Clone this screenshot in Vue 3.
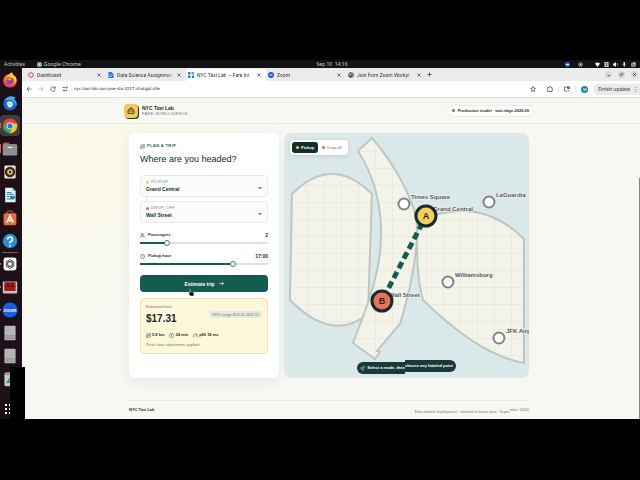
<script setup>
import { ref, computed } from 'vue'

const tabs = [
  { title: 'Dashboard', icon: 'ring' },
  { title: 'Data Science Assignmen', icon: 'doc' },
  { title: 'NYC Taxi Lab — Fare Int', icon: 'taxi', active: true },
  { title: 'Zoom', icon: 'zoom' },
  { title: 'Join from Zoom Workpl', icon: 'globe' },
]

const places = [
  { name: 'Times Square', x: 120, y: 71, lx: 127, ly: 66 },
  { name: 'Grand Central', x: 142, y: 83, lx: 149, ly: 78 },
  { name: 'LaGuardia', x: 205, y: 69, lx: 212, ly: 64 },
  { name: 'Williamsburg', x: 164, y: 149, lx: 171, ly: 144 },
  { name: 'Wall Street', x: 98, y: 168, lx: 105, ly: 164 },
  { name: 'JFK Airport', x: 215, y: 205, lx: 222, ly: 200 },
]

const pickup = ref('Grand Central')
const dropoff = ref('Wall Street')
const passengers = ref(2)
const hour = ref(17)
const mode = ref('pickup')

const from = computed(() => places.find((p) => p.name === pickup.value))
const to = computed(() => places.find((p) => p.name === dropoff.value))
const others = computed(() => places.filter((p) => p !== from.value && p !== to.value))
const passengerFill = computed(() => ({ '--fill': ((passengers.value - 1) / 5) * 100 + '%' }))
const hourFill = computed(() => ({ '--fill': (hour.value / 23) * 100 + '%' }))

function choose(place) {
  if (mode.value === 'pickup') pickup.value = place.name
  else dropoff.value = place.name
}
</script>

<template>
  <div class="screen">
    <div class="topbar">
      <div class="topbar-left">
        <span>Activities</span>
        <span class="app-name">
          <svg width="5" height="5" viewBox="0 0 10 10"><circle cx="5" cy="5" r="5" fill="#bbb" /><circle cx="5" cy="5" r="2" fill="#eee" stroke="#444" /></svg>
          Google Chrome
        </span>
      </div>
      <span class="clock">Sep 10&nbsp; 14:16</span>
      <div class="status">
        <svg viewBox="0 0 10 10"><circle cx="5" cy="5" r="5" fill="#2a67e0" /><path d="M2 5h6" stroke="#fff" stroke-width="2" /></svg>
        <svg class="gap-after" viewBox="0 0 10 10"><circle cx="5" cy="5" r="4" fill="#555" stroke="#bbb" /><circle cx="5" cy="5" r="1.5" fill="#ddd" /></svg>
        <svg viewBox="0 0 10 10"><path d="M0 3Q5-1 10 3L5 10Z" fill="#fff" /></svg>
        <svg viewBox="0 0 10 10"><rect x="1" width="8" height="10" fill="#ddd" /><path d="M3 3l4 4-2 2V1l2 2-4 4" stroke="#222" fill="none" /></svg>
        <svg viewBox="0 0 10 10"><path d="M0 3h2l4-3v10L2 7H0Z" fill="#eee" /><path d="M8 2q2 3 0 6" stroke="#eee" fill="none" /></svg>
        <svg viewBox="0 0 10 10"><rect x="3" width="3" height="7" rx="1" fill="#eee" /><path d="M1 5q3 5 7 0M5 8v2" stroke="#eee" fill="none" /></svg>
        <svg viewBox="0 0 10 10"><path d="M1 3h7v6H1ZM3 1h6v6" fill="#777" stroke="#ddd" /></svg>
      </div>
    </div>

    <div class="workspace">
      <nav class="dock" aria-label="Applications">
        <a href="#" class="dock-item" aria-label="Firefox">
          <svg viewBox="0 0 20 20"><circle cx="10" cy="11" r="8.5" fill="#ff7a1a" /><path d="M4 4Q8 5 9 3Q11 0 13 1Q13 4 17 6Q20 12 15 17Q18 8 11 7Z" fill="#ffcb2e" /><path d="M2 8Q1 17 10 19Q17 18 18 12Q13 19 7 14Z" fill="#f43d5c" /><circle cx="10" cy="11" r="4" fill="#7740c8" /><path d="M6 9q4-3 7 0q-2 0-3 2Z" fill="#ff9425" /></svg>
        </a>
        <a href="#" class="dock-item" aria-label="Thunderbird">
          <svg viewBox="0 0 20 20"><circle cx="10" cy="11" r="8.5" fill="#1769cf" /><path d="M3 7Q8-1 17 3L14 6Q19 7 18 14Q14 3 3 7Z" fill="#48aaf1" /><path d="M6 9q4-3 8 1q0 4-4 6q-4-2-4-7Z" fill="#e8f5ff" /><path d="M7 9l3 3 4-2" stroke="#67a8df" fill="none" /></svg>
        </a>
        <a href="#" class="dock-item current" aria-label="Google Chrome">
          <svg viewBox="0 0 20 20"><circle cx="10" cy="10" r="9" fill="#34a853" /><path d="M2.2 5.5A9 9 0 0 1 18.5 7H10L6 12Z" fill="#ea4335" /><path d="M18.5 7A9 9 0 0 1 9.5 19L14 12Q15 9 12 7Z" fill="#fbc817" /><circle cx="10" cy="10" r="4.3" fill="#fff" /><circle cx="10" cy="10" r="3.3" fill="#2878e8" /></svg>
        </a>
        <a href="#" class="dock-item running" aria-label="Files">
          <svg viewBox="0 0 20 20"><path d="M1 4q0-2 2-2h5l2 2h7q2 0 2 2v4H1Z" fill="#b8543c" /><rect x="1" y="4" width="18" height="14" rx="1.500" fill="#8f8f8f" /><path d="M7 8h6" stroke="#eee" stroke-width="1.500" /></svg>
        </a>
        <a href="#" class="dock-item" aria-label="Rhythmbox">
          <svg viewBox="0 0 20 20"><rect x="3" y="2" width="14" height="16" rx="1.5" fill="#eee8d7" /><circle cx="10" cy="10" r="6.5" fill="#302c29" /><circle cx="10" cy="10" r="3.5" fill="#f6c23c" /><circle cx="10" cy="10" r="1.5" fill="#302c29" /></svg>
        </a>
        <a href="#" class="dock-item" aria-label="Writer">
          <svg viewBox="0 0 20 20"><path d="M4 1h9l4 4v14H4Z" fill="#e8f5fb" /><path d="M13 1v4h4" fill="#7dc0df" /><path d="M6 7h6M6 9h9M6 12h3M6 15h9" stroke="#2388b8" stroke-width="1.3" /><rect x="10" y="11" width="6" height="4" fill="#2388b8" /></svg>
        </a>
        <a href="#" class="dock-item" aria-label="Software">
          <svg viewBox="0 0 20 20"><path d="M6 5q0-4 4-4t4 4" fill="none" stroke="#aa4a27" stroke-width="1.5" /><rect x="2" y="4" width="16" height="15" rx="2" fill="#ed6b3b" /><path d="M6 16L10 7l4 9M7 13h7" stroke="#fff" stroke-width="2" fill="none" /></svg>
        </a>
        <a href="#" class="dock-item" aria-label="Help">
          <svg viewBox="0 0 20 20"><circle cx="10" cy="10" r="9" fill="#2591d4" /><path d="M7 8q0-3 3-3t3 3q0 2-3 3v2M10 15v2" stroke="#fff" stroke-width="2" fill="none" /></svg>
        </a>
        <a href="#" class="dock-item after-line dot" aria-label="ChatGPT">
          <svg viewBox="0 0 20 20"><rect x="2" y="2" width="16" height="16" rx="3" fill="#fff" /><g fill="none" stroke="#333" stroke-width=".9"><ellipse cx="10" cy="10" rx="2.800" ry="5.500" /><ellipse cx="10" cy="10" rx="2.800" ry="5.500" transform="rotate(60 10 10)" /><ellipse cx="10" cy="10" rx="2.800" ry="5.500" transform="rotate(120 10 10)" /></g></svg>
        </a>
        <a href="#" class="dock-item dot" aria-label="Terminal">
          <svg viewBox="0 0 20 20"><rect x="1" y="3" width="18" height="15" rx="1" fill="#c9c2c0" /><rect x="3" y="4" width="14" height="11" fill="#a01a1c" /><path d="M3 9h14M8 5l-1 5M13 4v6" stroke="#5b0c10" /></svg>
        </a>
        <a href="#" class="dock-item dot" aria-label="Zoom">
          <svg viewBox="0 0 20 20"><circle cx="10" cy="10" r="9.500" fill="#185ee6" /><text x="10" y="12" text-anchor="middle" class="zoom-word">zoom</text></svg>
        </a>
        <a v-for="n in 2" :key="n" href="#" class="dock-item" aria-label="Drive">
          <svg viewBox="0 0 20 20"><rect x="3" y="1" width="14" height="18" rx="1" fill="#b5b5b5" /><text x="10" y="17" text-anchor="middle" class="ssd-word">SSD</text></svg>
        </a>
        <a href="#" class="dock-item" aria-label="Trash">
          <svg viewBox="0 0 20 20"><rect x="3" y="2" width="14" height="17" rx="2" fill="#c8c8c8" /><path d="M3 4h14" stroke="#555" /><path d="M7 14l3-5 3 5Z" fill="none" stroke="#2c9a45" stroke-width="2" /></svg>
        </a>
        <button class="apps" aria-label="Show applications">
          <svg width="8" height="12" viewBox="0 0 8 12"><g fill="#fff"><rect width="2" height="2" y="1" /><rect x="4" width="2" height="2" y="1" /><rect y="5" width="2" height="2" /><rect x="4" y="5" width="2" height="2" /><rect y="9" width="2" height="2" /><rect x="4" y="9" width="2" height="2" /></g></svg>
        </button>
        <div class="redaction"></div>
      </nav>

      <div class="browser">
        <div class="tabstrip">
          <div v-for="tab in tabs" :key="tab.title" class="tab" :class="{ active: tab.active }">
            <svg v-if="tab.icon === 'ring'" viewBox="0 0 12 12"><circle cx="6" cy="6" r="4.700" fill="none" stroke="#e0483d" stroke-width="2" /></svg>
            <svg v-else-if="tab.icon === 'doc'" viewBox="0 0 12 12"><path d="M1 0h6l4 4v8H1Z" fill="#2474e5" /><path d="M3 6h6M3 9h5" stroke="#fff" /></svg>
            <svg v-else-if="tab.icon === 'taxi'" viewBox="0 0 12 12"><path d="M0 0h5v5H0ZM0 7h5v5H0ZM8 7h4v5H8Z" fill="#1789c9" /><path d="M7 0h5v5H7Z" fill="#35b5da" /></svg>
            <svg v-else-if="tab.icon === 'zoom'" viewBox="0 0 12 12"><circle cx="6" cy="6" r="6" fill="#1c58d8" /><path d="M3 6h6" stroke="#fff" stroke-width="2" /></svg>
            <svg v-else viewBox="0 0 12 12"><circle cx="6" cy="6" r="5.500" fill="#444" /><path d="M2 3l4 2-2 3ZM7 1l3 3-3 1ZM7 7l3 0-2 3Z" fill="#fff" /></svg>
            <span class="tab-title">{{ tab.title }}</span>
            <button class="tab-close" aria-label="Close tab">
              <svg width="4" height="4" viewBox="0 0 8 8"><path d="M1 1l6 6M7 1L1 7" stroke="#444" stroke-width="1.500" /></svg>
            </button>
          </div>
          <button class="new-tab" aria-label="New tab"><svg width="5" height="5" viewBox="0 0 10 10"><path d="M5 1v8M1 5h8" stroke="#333" stroke-width="1.500" /></svg></button>
          <div class="window-buttons">
            <button aria-label="Minimize"><svg viewBox="0 0 14 14"><path d="M5 9h5" stroke="#444" stroke-width="1.500" /></svg></button>
            <button aria-label="Restore"><svg viewBox="0 0 14 14"><path d="M4 6h4v4H4ZM6 4h4v4" fill="none" stroke="#444" /></svg></button>
            <button aria-label="Close window"><svg viewBox="0 0 14 14"><path d="M4 4l6 6M10 4l-6 6" stroke="#333" stroke-width="1.500" /></svg></button>
          </div>
        </div>

        <div class="toolbar">
          <button aria-label="Back"><svg viewBox="0 0 12 12"><path d="M11 6H2M6 2L2 6l4 4" class="ink" /></svg></button>
          <button aria-label="Forward"><svg viewBox="0 0 12 12"><path d="M1 6h9M6 2l4 4-4 4" class="ink faint" /></svg></button>
          <button aria-label="Reload"><svg viewBox="0 0 12 12"><path d="M10 4A4.500 4.500 0 1 0 10.500 7M10.500 1v3.500H7" class="ink" /></svg></button>
          <svg viewBox="0 0 12 12"><path d="M1 3h5M1 9h2M7 9h4" class="ink" /><circle cx="9" cy="3" r="1.500" class="ink" /><circle cx="4.500" cy="9" r="1.500" class="ink" /></svg>
          <a href="#" class="url">nyc-taxi-lab.san-jose-sta-2217.chatgpt.site</a>
          <div class="tools">
            <button class="star" aria-label="Bookmark"><svg viewBox="0 0 12 12"><path d="M6 1l1.500 3.500 3.500.3-2.700 2.400.9 3.800L6 9l-3.200 2 .9-3.800L1 4.800l3.500-.3Z" class="ink" /></svg></button>
            <button aria-label="Extensions"><svg viewBox="0 0 12 12"><path d="M1 3h3q0-2 2-2t2 2h2v3q2 0 1 2h-1v3H1V8q2-1 0-2Z" class="ink" /></svg></button>
            <span class="rule"></span>
            <button aria-label="Side panel"><svg viewBox="0 0 12 12"><path d="M11 6V2H1v8h6" class="ink" /><path d="M7 2h4v3H7ZM8 8l3 3" class="ink" /></svg></button>
            <span class="rule"></span>
            <span class="avatar">M</span>
            <button class="update">Finish update <span>⋮</span></button>
          </div>
        </div>

        <div class="page">
          <header class="site-header">
            <div class="header-inner">
              <div class="brand-mark">
                <svg width="8" height="8" viewBox="0 0 16 16"><path d="M2 7L4 4h8l2 3v6H2ZM6 4V2h4v2M2 8h12M5 10v1M11 10v1" fill="none" stroke="#4b4518" stroke-width="1.800" /></svg>
              </div>
              <div class="brand">
                <strong>NYC Taxi Lab</strong>
                <span>FARE INTELLIGENCE</span>
              </div>
              <div class="model"><i class="dot-green"></i>Production model · taxi-ridge-2026.09</div>
            </div>
          </header>

          <main class="content">
            <form class="planner" @submit.prevent>
              <div class="eyebrow">
                <svg width="5" height="5" viewBox="0 0 12 12"><circle cx="2.500" cy="9.500" r="1.500" /><circle cx="9.500" cy="2.500" r="1.500" /><path d="M7 2H3q-2 0-2 2t2 2h6q2 0 2 2t-2 2H5" /></svg>
                PLAN A TRIP
              </div>
              <h1>Where are you headed?</h1>

              <div class="fields">
                <div class="field">
                  <label for="pickup"><i class="yellow"></i>PICKUP</label>
                  <select id="pickup" v-model="pickup">
                    <option v-for="p in places" :key="p.name">{{ p.name }}</option>
                  </select>
                  <svg class="chevron" width="4" height="4" viewBox="0 0 8 8"><path d="M1 2l3 3 3-3" /></svg>
                </div>
                <span class="link"></span>
                <div class="field">
                  <label for="dropoff"><i class="coral"></i>DROP-OFF</label>
                  <select id="dropoff" v-model="dropoff">
                    <option v-for="p in places" :key="p.name">{{ p.name }}</option>
                  </select>
                  <svg class="chevron" width="4" height="4" viewBox="0 0 8 8"><path d="M1 2l3 3 3-3" /></svg>
                </div>
              </div>

              <div class="slider">
                <div class="slider-head">
                  <svg width="5" height="5" viewBox="0 0 12 12"><circle cx="5" cy="4" r="2.500" /><path d="M1 11q0-4 4-4t4 4M8 1.500q3 1 1 4.500M10 8q1.500 1 1.500 3" /></svg>
                  <label for="passengers">Passengers</label>
                  <output for="passengers">{{ passengers }}</output>
                </div>
                <input id="passengers" v-model.number="passengers" type="range" min="1" max="6" :style="passengerFill" />
              </div>
              <div class="slider">
                <div class="slider-head">
                  <svg width="5" height="5" viewBox="0 0 12 12"><circle cx="6" cy="6" r="5" /><path d="M6 3v3l2 1" /></svg>
                  <label for="hour">Pickup hour</label>
                  <output for="hour">{{ hour }}:00</output>
                </div>
                <input id="hour" v-model.number="hour" type="range" min="0" max="23" :style="hourFill" />
              </div>

              <div class="submit">
                <button type="submit">
                  Estimate trip
                  <svg width="5" height="5" viewBox="0 0 10 10"><path d="M1 5h8M5.500 1.500L9 5 5.500 8.500" class="arrow" /></svg>
                </button>
                <svg class="cursor" width="6" height="7" viewBox="0 0 12 14"><path d="M3 1h2v5h5l2 2-1 6H5L1 9l2-1Z" fill="#111" stroke="#ddd" stroke-width=".8" /></svg>
              </div>

              <section class="result">
                <div class="result-top">
                  <div>
                    <span class="muted">Estimated fare</span>
                    <strong class="price">$17.31</strong>
                  </div>
                  <span class="chip">90% range $14.11–$20.51</span>
                </div>
                <div class="metrics">
                  <span><svg width="5" height="5" viewBox="0 0 12 12"><circle cx="2.500" cy="9.500" r="1.500" /><circle cx="9.500" cy="2.500" r="1.500" /><path d="M7 2H3q-2 0-2 2t2 2h6q2 0 2 2t-2 2H5" /></svg>5.8 km</span>
                  <span><svg width="5" height="5" viewBox="0 0 12 12"><circle cx="6" cy="6" r="5" /><path d="M6 3v3l2 1" /></svg>24 min</span>
                  <span><svg width="5" height="5" viewBox="0 0 12 12"><path d="M2 10A5 5 0 1 1 10 10M6 8l2-4" /></svg>p95 18 ms</span>
                </div>
                <div class="note">Peak-hour adjustment applied</div>
              </section>
            </form>

            <section class="map" aria-label="Trip map">
              <svg class="map-art" viewBox="0 0 245 245" preserveAspectRatio="xMidYMid slice">
                <defs>
                  <pattern id="blocks" x="6" y="1" width="17" height="17" patternUnits="userSpaceOnUse">
                    <rect width="17" height="17" fill="#f4f3ea" />
                    <path d="M0 .5H17M.5 0V17" stroke="#ece6d9" stroke-width=".8" />
                  </pattern>
                </defs>
                <g fill="url(#blocks)" stroke="#bcc7c5" stroke-width="2">
                  <path d="M8 61Q48 21 88 61L84 181Q48 210 6 167Z" />
                  <path d="M134 88Q195 61 240 106V230Q195 222 139 167Q131 140 134 88Z" />
                  <path d="M88 5L74 18C100 58 102 108 90 150C86 165 78 187 69 210L91 226L96 219L93 218L116 191C124 165 133 130 133 97C134 72 110 30 88 5Z" />
                </g>
                <line :x1="from.x" :y1="from.y" :x2="to.x" :y2="to.y" stroke="#155c50" stroke-width="5" stroke-dasharray="7 4" stroke-dashoffset="3" />
                <g class="place-labels">
                  <text v-for="p in places" :key="p.name" :x="p.lx" :y="p.ly">{{ p.name }}</text>
                </g>
                <circle v-for="p in others" :key="p.name" :cx="p.x" :cy="p.y" r="5.500" fill="#fff" stroke="#818483" stroke-width="2" class="stop" @click="choose(p)" />
                <circle :cx="from.x" :cy="from.y" r="10" fill="#f8cd58" stroke="#102e2b" stroke-width="3" />
                <circle :cx="to.x" :cy="to.y" r="10" fill="#ee7059" stroke="#102e2b" stroke-width="3" />
                <text class="pin" :x="from.x" :y="from.y + 3">A</text>
                <text class="pin" :x="to.x" :y="to.y + 3">B</text>
              </svg>
              <div class="mode">
                <button :class="{ on: mode === 'pickup' }" @click="mode = 'pickup'"><i class="yellow"></i>Pickup</button>
                <button :class="{ on: mode === 'dropoff' }" @click="mode = 'dropoff'"><i class="coral"></i>Drop-off</button>
              </div>
              <div class="hint">
                <span class="hint-start">
                  <svg width="5" height="5" viewBox="0 0 12 12"><path d="M1 5L11 1 7 11 5 7Z" fill="none" stroke="#fff" stroke-width="1.200" /></svg>
                  Select a mode, then
                </span>
                <span class="hint-end">choose any labeled point</span>
              </div>
            </section>
          </main>

          <footer class="site-footer">
            <strong>NYC Taxi Lab</strong>
            <span>Educational deployment · simulated demo data · Septe<span class="raised">mber 2026</span></span>
          </footer>
          <div class="scroll-thumb"></div>
        </div>
      </div>
    </div>
  </div>
</template>

<style>
body {
  margin: 0;
  background: #000;
}
</style>

<style scoped>
* {
  box-sizing: border-box;
}
button,
select,
input {
  font: inherit;
  color: inherit;
  border: 0;
  margin: 0;
  padding: 0;
  background: none;
}
a {
  color: inherit;
  text-decoration: none;
}
svg {
  display: block;
  flex: none;
}
i {
  display: block;
  flex: none;
  width: 3px;
  height: 3px;
  border-radius: 50%;
}
.yellow {
  background: #f3c84f;
}
.coral {
  background: #e8695a;
}
.screen {
  display: flex;
  flex-direction: column;
  min-height: 100vh;
  padding: 60px 0 61px;
  background: #000;
  font-family: 'Liberation Sans', Arial, sans-serif;
  font-size: 5px;
  line-height: 6px;
  color: #17302d;
}

/* desktop bar */
.topbar {
  display: grid;
  grid-template-columns: 1fr auto 1fr;
  align-items: center;
  height: 8px;
  padding: 0 4px;
  background: #121212;
  color: #d0d0d0;
  font-family: 'Noto Sans', sans-serif;
}
.topbar-left {
  display: flex;
  gap: 12px;
}
.app-name {
  display: flex;
  align-items: center;
  gap: 2px;
}
.clock {
  padding-left: 24px;
}
.status {
  display: flex;
  justify-content: flex-end;
  gap: 4px;
}
.status svg {
  width: 5px;
  height: 5px;
}
.status svg:first-child {
  margin-right: 4px;
}
.status .gap-after {
  margin-right: 8px;
}
.workspace {
  flex: 1;
  display: flex;
}

/* dock */
.dock {
  position: relative;
  flex: none;
  width: 22px;
  display: flex;
  flex-direction: column;
  gap: 2px;
  padding: 1px 2px 4px 0;
  background: #1d1019;
}
.dock-item {
  display: flex;
  align-items: center;
  justify-content: center;
  height: 21px;
  border-radius: 4px;
  position: relative;
}
.dock-item svg {
  width: 16px;
  height: 16px;
}
.current {
  background: #443b43;
}
.current::before,
.running::before,
.dot::before {
  content: '';
  position: absolute;
  left: 0;
  width: 1px;
  height: 2px;
  background: #e2592f;
}
.current::before {
  height: 5px;
}
.running::before {
  height: 9px;
}
.after-line::after {
  content: '';
  position: absolute;
  top: -1px;
  left: 2px;
  right: 2px;
  height: 1px;
  background: #6c626a;
}
.zoom-word {
  font-size: 6px;
  font-weight: 700;
  fill: #fff;
}
.ssd-word {
  font-size: 6px;
  fill: #777;
}
.apps {
  margin-top: auto;
  padding: 0 0 0 5px;
}
.redaction {
  position: absolute;
  left: 10px;
  bottom: 0;
  width: 15px;
  height: 52px;
  background: #000;
  z-index: 2;
}

/* browser chrome */
.browser {
  flex: 1;
  min-width: 0;
  display: flex;
  flex-direction: column;
  background: #fff;
}
.tabstrip {
  display: flex;
  align-items: center;
  height: 13px;
  padding: 0 2px 0 4px;
  background: #ebebec;
  font-family: Roboto, sans-serif;
  color: #333;
}
.tab {
  flex: 0 1 80px;
  min-width: 0;
  height: 12px;
  margin-top: 1px;
  display: flex;
  align-items: center;
  gap: 3px;
  padding: 0 5px 0 2px;
}
.tab > svg {
  width: 6px;
  height: 6px;
}
.tab.active {
  background: #fff;
  border-radius: 4px 4px 0 0;
}
.tab-title {
  flex: 1;
  min-width: 0;
  overflow: hidden;
  white-space: nowrap;
  mask-image: linear-gradient(to right, #000 85%, #0003);
}
.new-tab {
  margin-left: 1px;
}
.window-buttons {
  margin-left: auto;
  display: flex;
  gap: 6px;
}
.window-buttons svg {
  width: 7px;
  height: 7px;
  border-radius: 50%;
  background: #d9d9da;
}
.toolbar {
  display: flex;
  align-items: center;
  gap: 6px;
  height: 17px;
  padding: 0 0 0 4px;
  border-bottom: 1px solid #dcdedc;
  background: #fff;
  font-family: 'Noto Sans', sans-serif;
  color: #333;
}
.toolbar svg {
  width: 6px;
  height: 6px;
}
.ink {
  fill: none;
  stroke: #444;
  stroke-width: 1.4;
}
.faint {
  stroke: #aaa;
}
.url {
  font-family: 'DejaVu Sans', sans-serif;
  font-size: 4px;
  color: #222;
}
.tools {
  margin-left: auto;
  display: flex;
  align-items: center;
  gap: 5px;
}
.star {
  margin-right: 6px;
}
.rule {
  width: 1px;
  height: 6px;
  background: #dde3e8;
}
.avatar {
  width: 7px;
  height: 7px;
  border-radius: 50%;
  background: #128c9c;
  color: #fff;
  font-size: 4px;
  line-height: 7px;
  text-align: center;
}
.update {
  display: flex;
  gap: 3px;
  height: 11px;
  align-items: center;
  padding: 0 2px 0 5px;
  border-radius: 6px 0 0 6px;
  background: #e9eaec;
  white-space: nowrap;
}

/* site */
.page {
  position: relative;
  flex: 1;
  padding-right: 4px;
  background: radial-gradient(circle at 8% 12%, #fbf8e6, transparent 34%), #f7f8f3;
}
.site-header {
  margin-right: -4px;
  padding-right: 4px;
  background: #f6f8f1;
  border-bottom: 1px solid #e8ebe3;
}
.header-inner {
  display: flex;
  align-items: center;
  gap: 4px;
  max-width: 410px;
  height: 25px;
  margin: 0 auto;
}
.brand-mark {
  width: 14px;
  height: 14px;
  display: flex;
  align-items: center;
  justify-content: center;
  border-radius: 4px;
  background: #f5c955;
  box-shadow: 1px 1px 0 #17302d;
}
.brand {
  display: flex;
  flex-direction: column;
}
.brand span {
  font-size: 4px;
  letter-spacing: 0.08em;
  color: #6d7a77;
}
.model {
  margin-left: auto;
  display: flex;
  align-items: center;
  gap: 3px;
  height: 12px;
  padding: 0 4px;
  border: 1px solid #e9ece8;
  border-radius: 6px;
  background: #fff;
  font-size: 4px;
  font-weight: 700;
}
.dot-green {
  background: #2d9c74;
}
.content {
  display: grid;
  grid-template-columns: 38fr 62fr;
  gap: 5px;
  max-width: 400px;
  margin: 0 auto;
  padding-top: 9px;
}
.planner {
  display: flex;
  flex-direction: column;
  min-height: 245px;
  padding: 10px 11px;
  border-radius: 7px;
  background: #fff;
  box-shadow: 0 4px 14px #17302d14;
}
.planner svg {
  fill: none;
  stroke: #35504c;
  stroke-width: 1.3;
}
.eyebrow {
  display: flex;
  align-items: center;
  gap: 2px;
  font-size: 4px;
  font-weight: 700;
  letter-spacing: 0.1em;
  color: #226256;
}
h1 {
  margin: 5px 0 0;
  font-size: 9px;
  line-height: 11px;
  font-weight: 400;
  color: #102b28;
}
.fields {
  margin-top: 10px;
}
.field {
  position: relative;
  height: 22px;
  padding: 3px 5px;
  border: 1px solid #e9ebe8;
  border-radius: 4px;
  background: #fbfcfa;
}
.field label {
  display: flex;
  align-items: center;
  gap: 2px;
  font-size: 4px;
  line-height: 6px;
  letter-spacing: 0.1em;
  color: #74807d;
}
.field select {
  display: block;
  width: 100%;
  height: 8px;
  line-height: 8px;
  appearance: none;
  font-weight: 700;
}
.planner .chevron {
  position: absolute;
  right: 5px;
  bottom: 6px;
  stroke: #1d2523;
  stroke-width: 2;
}
.link {
  display: block;
  width: 1px;
  height: 4px;
  margin-left: 6px;
  background: #dfe3df;
}
.slider {
  margin-top: 9px;
}
.slider + .slider {
  margin-top: 7px;
}
.slider-head {
  display: flex;
  align-items: center;
  gap: 3px;
  font-weight: 700;
}
.slider-head label {
  font-size: 4px;
}
.slider-head output {
  margin-left: auto;
}
.slider input {
  display: block;
  width: 100%;
  height: 6px;
  margin-top: 2px;
  appearance: none;
  background: linear-gradient(to right, #155c50 var(--fill), #dce2df var(--fill)) center / 100% 2px no-repeat;
}
.slider input::-webkit-slider-thumb {
  appearance: none;
  width: 6px;
  height: 6px;
  border: 1px solid #447a71;
  border-radius: 50%;
  background: #fff;
}
.submit {
  position: relative;
  margin-top: 8px;
}
.submit button {
  width: 100%;
  height: 17px;
  display: flex;
  align-items: center;
  justify-content: center;
  gap: 4px;
  border-radius: 4px;
  background: #155c50;
  color: #fff;
  font-weight: 700;
}
.arrow {
  stroke: #fff;
}
.submit .cursor {
  position: absolute;
  left: 48px;
  top: 14px;
}
.result {
  margin-top: 6px;
  padding: 5px;
  border: 1px solid #eee3ad;
  border-radius: 4px;
  background: #fef7d9;
}
.result-top {
  display: flex;
  align-items: center;
  justify-content: space-between;
}
.muted {
  display: block;
  font-size: 4px;
  color: #77786a;
}
.price {
  display: block;
  margin-top: 2px;
  font-size: 10px;
  line-height: 13px;
  color: #102b28;
}
.chip {
  padding: 0 3px;
  border-radius: 3px;
  background: #e8eae0;
  font-size: 4px;
  line-height: 7px;
  color: #6a7573;
  white-space: nowrap;
}
.metrics {
  display: flex;
  gap: 5px;
  margin-top: 7px;
  font-size: 4px;
  font-weight: 700;
}
.metrics span {
  display: flex;
  align-items: center;
  gap: 1px;
}
.note {
  margin-top: 4px;
  font-size: 4px;
  color: #77786a;
}

/* map */
.map {
  position: relative;
  overflow: hidden;
  border-radius: 7px;
  background: #dbe8e9;
}
.map-art {
  width: 100%;
  height: 100%;
}
.place-labels {
  font-size: 6px;
  font-weight: 700;
  fill: #53595a;
  stroke: #f6f6ef;
  stroke-width: 1px;
  paint-order: stroke;
}
.stop {
  cursor: pointer;
}
.pin {
  font-size: 9px;
  font-weight: 700;
  text-anchor: middle;
  fill: #102e2b;
}
.mode {
  position: absolute;
  top: 7px;
  left: 6px;
  display: flex;
  padding: 2px;
  border-radius: 4px;
  background: #fff;
  box-shadow: 0 1px 4px #17302d22;
}
.mode button {
  display: flex;
  align-items: center;
  gap: 2px;
  height: 11px;
  padding: 0 4px;
  border-radius: 3px;
  font-size: 4px;
  color: #6b7775;
}
.mode .on {
  background: #102e2b;
  color: #fff;
  font-weight: 700;
}
.hint {
  position: absolute;
  left: 0;
  right: 0;
  bottom: 4px;
  display: flex;
  justify-content: center;
  align-items: flex-start;
  height: 14px;
  font-size: 4px;
  font-weight: 700;
  color: #fff;
  white-space: nowrap;
}
.hint span {
  display: flex;
  align-items: center;
  gap: 2px;
  height: 12px;
  background: #17393a;
}
.hint .hint-start {
  align-self: flex-end;
  padding-left: 3px;
  border-radius: 6px 0 0 6px;
}
.hint .hint-end {
  padding-right: 3px;
  border-radius: 0 6px 6px 0;
}

.site-footer {
  display: flex;
  justify-content: space-between;
  max-width: 400px;
  margin: 22px auto 0;
  padding-top: 6px;
  border-top: 1px solid #e6e9e3;
  font-size: 4px;
}
.site-footer > span {
  font-family: Lato, sans-serif;
  color: #74807d;
}
.raised {
  vertical-align: 2px;
}
.scroll-thumb {
  position: absolute;
  right: 0;
  top: 80px;
  bottom: 0;
  width: 1px;
  background: #858786;
}
</style>
